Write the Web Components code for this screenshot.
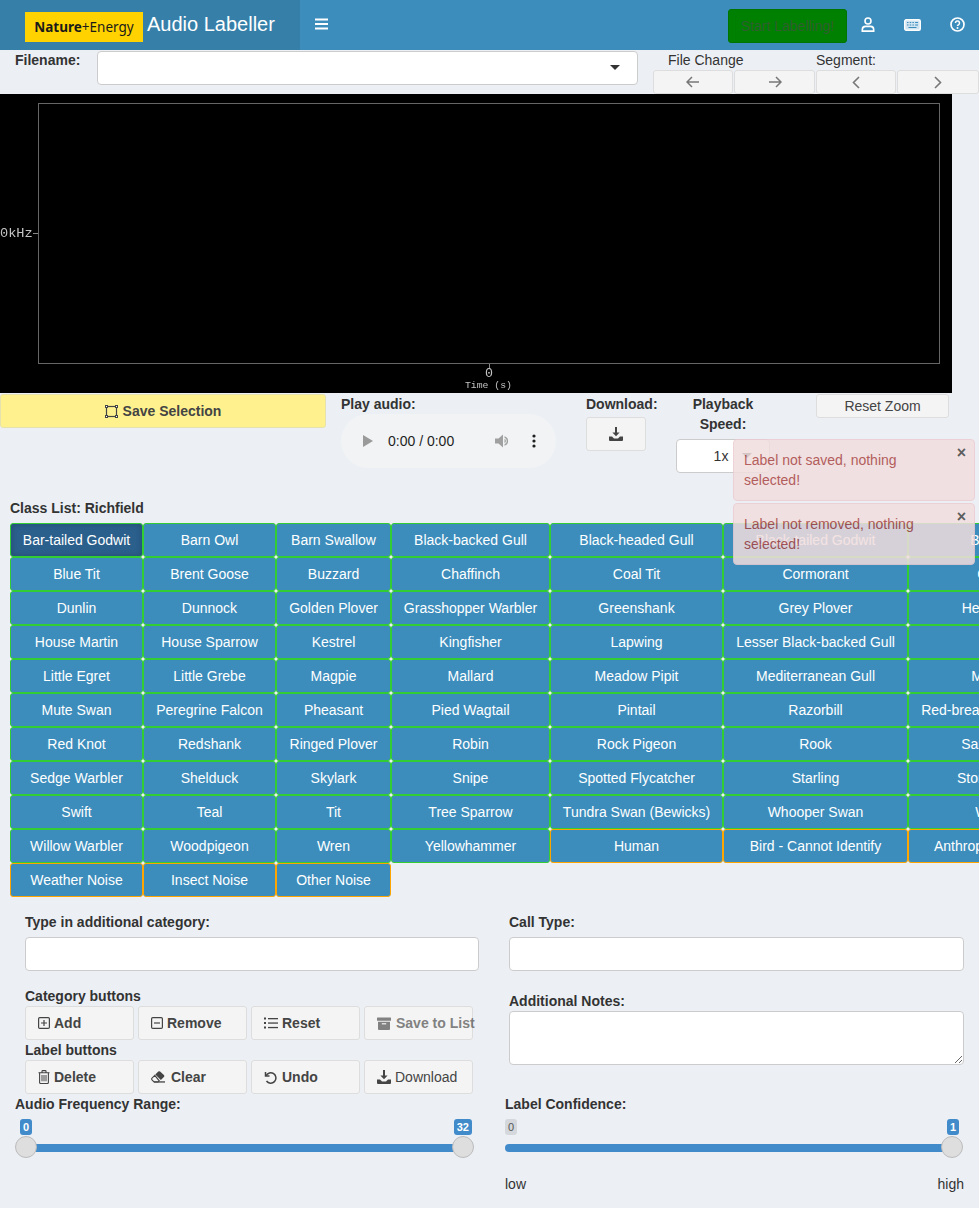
<!DOCTYPE html>
<html lang="en">
<head>
<meta charset="utf-8">
<title>Audio Labeller</title>
<style>
  html, body { margin: 0; height: 1208px; overflow: hidden; }
  body {
    position: relative;
    width: 979px;
    background: #ecf0f5;
    color: #333;
    font: 14px/20px "Liberation Sans", Arial, sans-serif;
  }
</style>
</head>
<body>
<app-header></app-header>
<file-bar></file-bar>
<spectro-plot></spectro-plot>
<control-row></control-row>
<class-grid title="Class List: Richfield"></class-grid>
<label-form></label-form>
<div style="display:flex;padding-left:15px">
  <range-slider style="width:459px;margin-right:31px" label="Audio Frequency Range:" from="0" to="32" pad-l="5" pad-r="2"></range-slider>
  <range-slider style="width:459px" label="Label Confidence:" from="0" to="1" single="1"></range-slider>
</div>
<toast-stack>
  <toast-note>Label not saved, nothing selected!</toast-note>
  <toast-note>Label not removed, nothing selected!</toast-note>
</toast-stack>

<script>
const ICONS = {
  bars: `<svg width="13" height="12" viewBox="0 0 13 12" fill="#fff"><rect y="0.5" width="13" height="2"/><rect y="5" width="13" height="2"/><rect y="9.5" width="13" height="2"/></svg>`,
  user: `<svg width="14" height="15" viewBox="0 0 14 15" fill="none" stroke="#fff" stroke-width="1.6"><circle cx="7" cy="4" r="3"/><path d="M1.3 14.1h11.4v-1.4c0-2-1.4-3.3-3.2-3.3h-5c-1.8 0-3.2 1.300-3.200 3.300z"/></svg>`,
  keyboard: `<svg width="17" height="12" viewBox="0 0 17 12"><rect x=".7" y=".7" width="15.600" height="10.600" rx="1.500" fill="#cfe3f0" stroke="#fff" stroke-width="1.400"/><path d="M3 3.500h1.500M5.700 3.500h1.500M8.400 3.500h1.500M11.100 3.500h2.900M3 6h1.500M5.700 6h1.500M8.400 6h1.500M11.100 6h2.900M4.500 8.500h8" stroke="#3c8dbc" stroke-width="1.100"/></svg>`,
  question: `<svg width="15" height="15" viewBox="0 0 15 15" fill="none" stroke="#fff"><circle cx="7.500" cy="7.500" r="6.500" stroke-width="1.700"/><path d="M5.500 5.900a2 2 0 1 1 3.100 1.700c-.8.500-1.100.8-1.100 1.500" stroke-width="1.500"/><circle cx="7.500" cy="11" r="1" fill="#fff" stroke="none"/></svg>`,
  left: `<svg width="14" height="12" viewBox="0 0 14 12" fill="none" stroke="#777" stroke-width="1.500"><path d="M13 6H1.500M6 1 1 6l5 5"/></svg>`,
  right: `<svg width="14" height="12" viewBox="0 0 14 12" fill="none" stroke="#777" stroke-width="1.500"><path d="M1 6h11.500M8 1l5 5-5 5"/></svg>`,
  chevl: `<svg width="8" height="13" viewBox="0 0 8 13" fill="none" stroke="#777" stroke-width="1.600"><path d="M7 1 1.500 6.500 7 12"/></svg>`,
  chevr: `<svg width="8" height="13" viewBox="0 0 8 13" fill="none" stroke="#777" stroke-width="1.600"><path d="M1 1l5.500 5.500L1 12"/></svg>`,
  square: `<svg width="13" height="13" viewBox="0 0 13 13" fill="none" stroke="#444"><rect x="1.500" y="1.500" width="10" height="10" stroke-width="1.200"/><g fill="#fff" stroke-width="1"><rect x=".5" y=".5" width="2" height="2"/><rect x="10.500" y=".5" width="2" height="2"/><rect x=".5" y="10.500" width="2" height="2"/><rect x="10.500" y="10.500" width="2" height="2"/></g></svg>`,
  download: `<svg width="14" height="14" viewBox="0 0 14 14" fill="#444"><path d="M6 0h2v5.500h2.600L7 9.200 3.400 5.500H6z"/><path d="M0 9.500h3l2 2h4l2-2h3V13a1 1 0 0 1-1 1H1a1 1 0 0 1-1-1z"/></svg>`,
  plus: `<svg width="12" height="12" viewBox="0 0 12 12" fill="none" stroke="#444"><rect x=".6" y=".6" width="10.800" height="10.800" rx="1.200" stroke-width="1.200"/><path d="M6 3v6M3 6h6" stroke-width="1.200"/></svg>`,
  minus: `<svg width="12" height="12" viewBox="0 0 12 12" fill="none" stroke="#444"><rect x=".6" y=".6" width="10.800" height="10.800" rx="1.200" stroke-width="1.200"/><path d="M3 6h6" stroke-width="1.200"/></svg>`,
  list: `<svg width="14" height="12" viewBox="0 0 14 12" fill="#444"><rect y=".5" width="2" height="2"/><rect y="5" width="2" height="2"/><rect y="9.500" width="2" height="2"/><rect x="4" y="1" width="10" height="1.300"/><rect x="4" y="5.400" width="10" height="1.300"/><rect x="4" y="9.900" width="10" height="1.300"/></svg>`,
  archive: `<svg width="14" height="13" viewBox="0 0 14 13" fill="#444"><rect y=".5" width="14" height="3.200" rx=".5"/><path d="M1 4.700h12v7.300a1 1 0 0 1-1 1H2a1 1 0 0 1-1-1z"/><rect x="4.800" y="6.200" width="4.400" height="1.200" fill="#f4f4f4"/></svg>`,
  trash: `<svg width="12" height="14" viewBox="0 0 12 14" fill="none" stroke="#444"><path d="M.5 2.800h11M4 2.800V1.300q0-.7.700-.7h2.600q.7 0 .7.700v1.500" stroke-width="1.100"/><path d="M1.600 2.800v9.700q0 1 1 1h6.800q1 0 1-1V2.800" stroke-width="1.100"/><path d="M4 5v6.300M6 5v6.300M8 5v6.300" stroke-width="1"/></svg>`,
  eraser: `<svg width="14" height="12" viewBox="0 0 14 12" fill="#444"><path d="M4.300 3.600 7.300.6a1.300 1.300 0 0 1 1.800 0l3.800 3.500a1.300 1.300 0 0 1 0 1.800l-3 3z"/><path d="M3.800 4.400 1 7.200a1.200 1.200 0 0 0 0 1.700l2 2.100h4l1.200-1.200z" fill="none" stroke="#444" stroke-width="1.100"/><rect x="3" y="10.300" width="11" height="1.300"/></svg>`,
  undo: `<svg width="13" height="13" viewBox="0 0 13 13" fill="none" stroke="#444" stroke-width="1.500"><path d="M1.500 1v4h4"/><path d="M2 4.800A5.200 5.200 0 1 1 2.500 10"/></svg>`,
};

class AppHeader extends HTMLElement {
  constructor() {
    super();
    this.attachShadow({ mode: "open" });
  }

  static get styles() {
    return /* css */`
      :host {
        display: flex;
        height: 50px;
        background: #3c8dbc;
        color: #fff;
      }

      .brand {
        display: flex;
        align-items: center;
        box-sizing: border-box;
        width: 300px;
        padding-left: 25px;
        background: #367fa9;
      }

      .logo {
        display: block;
        width: 118px;
        height: 30px;
        margin-top: 4px;
        margin-right: 4px;
        background: #ffd200;
        color: #1a1a1a;
        font: 13.500px/31px "Noto Sans", sans-serif;
        text-align: center;
      }

      .logo b {
        font-weight: 700;
      }

      .title {
        font-size: 20px;
        margin-top: -2px;
      }

      .toggle {
        display: flex;
        align-items: center;
        margin-left: 15px;
        margin-top: -2px;
      }

      .right {
        display: flex;
        align-items: center;
        margin-left: auto;
      }

      .start {
        box-sizing: border-box;
        width: 119px;
        height: 34px;
        margin-top: 2px;
        background: #008000;
        border: 1px solid #007400;
        border-radius: 3px;
        color: #2f5f2f;
        font: inherit;
        padding: 0;
      }

      .nav {
        display: flex;
        justify-content: center;
        width: 44px;
        margin-top: -1px;
      }
    `;
  }

  connectedCallback() {
    this.shadowRoot.innerHTML = /* html */`
    <style>${AppHeader.styles}</style>
    <div class="brand">
      <span class="logo"><b>Nature</b>+Energy</span>
      <span class="title">Audio Labeller</span>
    </div>
    <div class="toggle">${ICONS.bars}</div>
    <div class="right">
      <button class="start">Start Labelling!</button>
      <span class="nav" style="margin-left:-1px">${ICONS.user}</span>
      <span class="nav" style="margin-right:1px">${ICONS.keyboard}</span>
      <span class="nav">${ICONS.question}</span>
    </div>`;
  }
}

// plain grey bootstrap style button, label goes in the slot
class ActionButton extends HTMLElement {
  constructor() {
    super();
    this.attachShadow({ mode: "open" });
  }

  static get styles() {
    return /* css */`
      :host {
        display: block;
        box-sizing: border-box;
        height: 34px;
        background: #f4f4f4;
        border: 1px solid #ddd;
        border-radius: 3px;
        color: #444;
        white-space: nowrap;
      }

      :host([disabled]) .inner {
        opacity: .65;
      }

      :host([bold]) .inner {
        font-weight: 700;
      }

      :host([center]) .inner {
        justify-content: center;
        padding: 0;
      }

      .inner {
        display: flex;
        align-items: center;
        height: 100%;
        padding-left: 12px;
      }

      svg {
        display: block;
        flex: none;
      }

      .gap {
        width: var(--icon-gap, 4px);
        flex: none;
      }
    `;
  }

  connectedCallback() {
    const icon = this.getAttribute("icon");
    this.shadowRoot.innerHTML = /* html */`
    <style>${ActionButton.styles}</style>
    <div class="inner">
      ${icon ? ICONS[icon] : ""}
      <span class="gap"></span>
      <slot></slot>
    </div>`;
  }
}

class FileBar extends HTMLElement {
  constructor() {
    super();
    this.attachShadow({ mode: "open" });
  }

  static get styles() {
    return /* css */`
      :host {
        display: flex;
        height: 44px;
      }

      .name {
        width: 82px;
        padding-left: 15px;
        font-weight: 700;
      }

      .select {
        position: relative;
        box-sizing: border-box;
        width: 541px;
        height: 34px;
        margin-top: 1px;
        background: #fff;
        border: 1px solid #ccc;
        border-radius: 4px;
      }

      .select::after {
        content: "";
        position: absolute;
        right: 17px;
        top: 13px;
        border: 5px solid transparent;
        border-top-color: #333;
        border-bottom: 0;
      }

      .nav {
        display: grid;
        grid-template-columns: 81px 82px 81px 82px;
        grid-template-rows: 20px 24px;
        margin-left: 15px;
      }

      .head {
        grid-column: span 2;
      }

      .head:first-child {
        padding-left: 15px;
      }

      action-button {
        height: 24px;
        margin-right: 1px;
      }

      action-button:last-child {
        margin-right: 0;
      }
    `;
  }

  connectedCallback() {
    const arrow = (icon) => `<action-button center icon="${icon}" style="--icon-gap:0"></action-button>`;
    this.shadowRoot.innerHTML = /* html */`
    <style>${FileBar.styles}</style>
    <div class="name">Filename:</div>
    <div class="select"></div>
    <div class="nav">
      <div class="head">File Change</div>
      <div class="head">Segment:</div>
      ${arrow("left")}${arrow("right")}${arrow("chevl")}${arrow("chevr")}
    </div>`;
  }
}

class SpectroPlot extends HTMLElement {
  constructor() {
    super();
    this.attachShadow({ mode: "open" });
  }

  static get styles() {
    return /* css */`
      :host {
        display: block;
        width: 952px;
        height: 299px;
        background: #000;
      }

      svg {
        display: block;
        will-change: transform;
      }

      text {
        fill: #c4c4c4;
        font-family: "Liberation Mono", monospace;
      }
    `;
  }

  connectedCallback() {
    this.shadowRoot.innerHTML = /* html */`
    <style>${SpectroPlot.styles}</style>
    <svg width="952" height="299">
      <rect x="38.500" y="9.500" width="901" height="260" fill="none" stroke="#666"/>
      <path d="M33 139.500h5M489.500 270v5" stroke="#888"/>
      <text x="0" y="143" font-size="13.600">0kHz</text>
      <text x="489" y="283" font-size="13.300" text-anchor="middle">0</text>
      <text x="488.500" y="294" font-size="9.800" text-anchor="middle">Time (s)</text>
    </svg>`;
  }
}

class AudioBar extends HTMLElement {
  constructor() {
    super();
    this.attachShadow({ mode: "open" });
  }

  static get styles() {
    return /* css */`
      :host {
        display: flex;
        align-items: center;
        box-sizing: border-box;
        width: 215px;
        height: 54px;
        padding-left: 22px;
        background: #f1f3f4;
        border-radius: 27px;
        color: #1f1f1f;
      }

      .time {
        margin-left: 15px;
      }

      .vol {
        margin-left: 41px;
      }

      .more {
        margin-left: 21px;
      }

      svg {
        display: block;
      }
    `;
  }

  connectedCallback() {
    this.shadowRoot.innerHTML = /* html */`
    <style>${AudioBar.styles}</style>
    <svg width="10" height="12" viewBox="0 0 10 12"><path d="M0 0l10 6-10 6z" fill="#9a9a9a"/></svg>
    <span class="time">0:00 / 0:00</span>
    <svg class="vol" width="16" height="14" viewBox="0 0 16 14" fill="#a0a0a0"><path d="M0 4.500h3.500L8 .5v13l-4.500-4H0z"/><path d="M9.500 2.200a5 5 0 0 1 0 9.600v-1.600a3.400 3.400 0 0 0 0-6.400z"/><path d="M9.500 4.800a2.400 2.400 0 0 1 0 4.400z"/></svg>
    <svg class="more" width="4" height="14" viewBox="0 0 4 14" fill="#1f1f1f"><circle cx="2" cy="2" r="1.600"/><circle cx="2" cy="7" r="1.600"/><circle cx="2" cy="12" r="1.600"/></svg>`;
  }
}

class ControlRow extends HTMLElement {
  constructor() {
    super();
    this.attachShadow({ mode: "open" });
  }

  static get styles() {
    return /* css */`
      :host {
        display: flex;
        align-items: flex-start;
        height: 105px;
        padding-top: 1px;
        box-sizing: border-box;
      }

      b {
        display: block;
      }

      .save {
        width: 326px;
        margin-right: 15px;
        background: #fff28e;
        border-color: #e6e2b0;
        --icon-gap: 5px;
      }

      .play {
        width: 245px;
      }

      .dl {
        width: 90px;
      }

      .dl action-button {
        width: 60px;
        margin-top: 3px;
        --icon-gap: 0;
      }

      .speed {
        width: 94px;
        text-align: center;
        margin-right: 46px;
      }

      .speed .box {
        position: relative;
        box-sizing: border-box;
        height: 34px;
        margin-top: 5px;
        padding-right: 4px;
        background: #fff;
        border: 1px solid #ccc;
        border-radius: 4px;
        line-height: 32px;
      }

      .speed .box::after {
        content: "";
        position: absolute;
        right: 17px;
        top: 13px;
        border: 5px solid transparent;
        border-top-color: #333;
        border-bottom: 0;
      }

      .reset {
        width: 133px;
        height: 24px;
        --icon-gap: 0;
      }
    `;
  }

  connectedCallback() {
    this.shadowRoot.innerHTML = /* html */`
    <style>${ControlRow.styles}</style>
    <action-button class="save" center bold icon="square">Save Selection</action-button>
    <div class="play"><b>Play audio:</b><audio-bar></audio-bar></div>
    <div class="dl"><b>Download:</b><action-button center icon="download"></action-button></div>
    <div class="speed"><b>Playback Speed:</b><div class="box">1x</div></div>
    <action-button class="reset" center>Reset Zoom</action-button>`;
  }
}

class ClassGrid extends HTMLElement {
  constructor() {
    super();
    this.attachShadow({ mode: "open" });
  }

  static get classes() {
    return [
      "Bar-tailed Godwit", "Barn Owl", "Barn Swallow", "Black-backed Gull", "Black-headed Gull", "Black-tailed Godwit", "Blackbird",
      "Blue Tit", "Brent Goose", "Buzzard", "Chaffinch", "Coal Tit", "Cormorant", "Curlew",
      "Dunlin", "Dunnock", "Golden Plover", "Grasshopper Warbler", "Greenshank", "Grey Plover", "Herring Gull",
      "House Martin", "House Sparrow", "Kestrel", "Kingfisher", "Lapwing", "Lesser Black-backed Gull", "Linnet",
      "Little Egret", "Little Grebe", "Magpie", "Mallard", "Meadow Pipit", "Mediterranean Gull", "Moorhen",
      "Mute Swan", "Peregrine Falcon", "Pheasant", "Pied Wagtail", "Pintail", "Razorbill", "Red-breasted Merganser",
      "Red Knot", "Redshank", "Ringed Plover", "Robin", "Rock Pigeon", "Rook", "Sand Martin",
      "Sedge Warbler", "Shelduck", "Skylark", "Snipe", "Spotted Flycatcher", "Starling", "Stone Curlew",
      "Swift", "Teal", "Tit", "Tree Sparrow", "Tundra Swan (Bewicks)", "Whooper Swan", "Wigeon",
      "Willow Warbler", "Woodpigeon", "Wren", "Yellowhammer", "Human", "Bird - Cannot Identify", "Anthropogenic Noise",
      "Weather Noise", "Insect Noise", "Other Noise",
    ];
  }

  static get styles() {
    return /* css */`
      :host {
        display: block;
        padding-left: 10px;
      }

      .title {
        font-weight: 700;
        margin-bottom: 5px;
      }

      .grid {
        display: grid;
        grid-template-columns: 133px 133px 115px 159px 173px 185px 182px;
        grid-auto-rows: 34px;
        width: 1080px;
      }

      button {
        padding: 0;
        background: #3c8dbc;
        border: 1px solid #32cd32;
        border-radius: 3px;
        color: #fff;
        font: inherit;
        white-space: nowrap;
      }

      .other {
        border-color: #ffa500;
      }

      .on {
        background: #2b5f8c;
        box-shadow: inset 0 0 6px rgba(0, 0, 0, .2);
      }
    `;
  }

  connectedCallback() {
    const other = ["Human", "Bird - Cannot Identify", "Anthropogenic Noise", "Weather Noise", "Insect Noise", "Other Noise"];
    const buttons = ClassGrid.classes.map((name, i) => {
      const cls = [other.includes(name) ? "other" : "", i === 0 ? "on" : ""].join(" ").trim();
      return `<button class="${cls}">${name}</button>`;
    }).join("");
    this.shadowRoot.innerHTML = /* html */`
    <style>${ClassGrid.styles}</style>
    <div class="title">${this.getAttribute("title")}</div>
    <div class="grid">${buttons}</div>`;
  }
}

class LabelForm extends HTMLElement {
  constructor() {
    super();
    this.attachShadow({ mode: "open" });
  }

  static get styles() {
    return /* css */`
      :host {
        display: flex;
        padding: 15px 0 0 25px;
      }

      .left {
        width: 454px;
        margin-right: 30px;
      }

      .right {
        width: 455px;
      }

      b {
        display: block;
      }

      input,
      textarea {
        display: block;
        box-sizing: border-box;
        width: 100%;
        margin: 5px 0 0;
        background: #fff;
        border: 1px solid #ccc;
        border-radius: 4px;
        font: inherit;
      }

      input {
        height: 34px;
      }

      textarea {
        height: 54px;
        margin: 0;
      }

      .cat {
        margin-top: 15px;
      }

      .notes {
        margin-top: 20px;
      }

      .btns {
        display: grid;
        grid-template-columns: repeat(4, 109px);
        column-gap: 4px;
      }
    `;
  }

  connectedCallback() {
    this.shadowRoot.innerHTML = /* html */`
    <style>${LabelForm.styles}</style>
    <div class="left">
      <b>Type in additional category:</b>
      <input type="text">
      <b class="cat">Category buttons</b>
      <div class="btns">
        <action-button bold icon="plus">Add</action-button>
        <action-button bold icon="minus">Remove</action-button>
        <action-button bold icon="list">Reset</action-button>
        <action-button bold disabled icon="archive" style="--icon-gap:5px">Save to List</action-button>
      </div>
      <b>Label buttons</b>
      <div class="btns">
        <action-button bold icon="trash">Delete</action-button>
        <action-button bold icon="eraser" style="--icon-gap:6px">Clear</action-button>
        <action-button bold icon="undo" style="--icon-gap:5px">Undo</action-button>
        <action-button icon="download">Download</action-button>
      </div>
    </div>
    <div class="right">
      <b>Call Type:</b>
      <input type="text">
      <b class="notes">Additional Notes:</b>
      <textarea></textarea>
    </div>`;
  }
}

class RangeSlider extends HTMLElement {
  constructor() {
    super();
    this.attachShadow({ mode: "open" });
  }

  static get styles() {
    return /* css */`
      :host {
        display: block;
      }

      b {
        display: block;
      }

      .bubbles {
        display: flex;
        justify-content: space-between;
        margin-top: 5px;
        height: 17px;
      }

      .bubble {
        height: 16px;
        padding: 0 3px;
        background: #428bca;
        border-radius: 3px;
        color: #fff;
        font-size: 11px;
        line-height: 16px;
        font-weight: 700;
      }

      .bubble.off {
        background: rgba(0, 0, 0, .1);
        color: #555;
        font-weight: 400;
      }

      .track {
        position: relative;
        display: flex;
        height: 22px;
      }

      .track::before {
        content: "";
        position: absolute;
        left: 0;
        right: 0;
        top: 8px;
        height: 8px;
        background: #428bca;
      }

      .fill {
        flex: 1;
      }

      .handle {
        position: relative;
        box-sizing: border-box;
        width: 22px;
        height: 22px;
        background: #dedede;
        border: 1px solid #bbb;
        border-radius: 50%;
      }

      :host([single]) .track {
        margin-right: 1px;
      }

      :host([single]) .track::before {
        border-radius: 4px 0 0 4px;
        right: 10px;
      }

      :host(:not([single])) .track::before {
        left: 11px;
        right: 11px;
      }

      .scale {
        display: flex;
        justify-content: space-between;
        margin-top: 16px;
      }
    `;
  }

  connectedCallback() {
    const single = this.hasAttribute("single");
    const padL = this.getAttribute("pad-l") || 0;
    const padR = this.getAttribute("pad-r") || 5;
    this.shadowRoot.innerHTML = /* html */`
    <style>${RangeSlider.styles}</style>
    <b>${this.getAttribute("label")}</b>
    <div class="bubbles" style="padding:0 ${padR}px 0 ${padL}px">
      <span class="bubble ${single ? "off" : ""}">${this.getAttribute("from")}</span>
      <span class="bubble">${this.getAttribute("to")}</span>
    </div>
    <div class="track">
      ${single ? "" : `<span class="handle"></span>`}
      <span class="fill"></span>
      <span class="handle"></span>
    </div>
    ${single ? `<div class="scale"><span>low</span><span>high</span></div>` : ""}`;
  }
}

class ToastStack extends HTMLElement {
  constructor() {
    super();
    this.attachShadow({ mode: "open" });
  }

  connectedCallback() {
    this.shadowRoot.innerHTML = /* html */`
    <style>
      :host {
        position: absolute;
        left: 733px;
        top: 439px;
        display: flex;
        flex-direction: column;
        gap: 2px;
        width: 242px;
      }
    </style>
    <slot></slot>`;
  }
}

class ToastNote extends HTMLElement {
  constructor() {
    super();
    this.attachShadow({ mode: "open" });
  }

  static get styles() {
    return /* css */`
      :host {
        position: relative;
        display: block;
        box-sizing: border-box;
        height: 62px;
        padding: 10px 30px 10px 10px;
        background: #f2dede;
        border: 1px solid #ebccd1;
        border-radius: 4px;
        color: #a94442;
        opacity: .85;
      }

      .close {
        position: absolute;
        right: 8px;
        top: 3px;
        color: #444;
        font-size: 16px;
        font-weight: 700;
      }
    `;
  }

  connectedCallback() {
    this.shadowRoot.innerHTML = /* html */`
    <style>${ToastNote.styles}</style>
    <slot></slot>
    <span class="close">×</span>`;
  }
}

customElements.define("app-header", AppHeader);
customElements.define("action-button", ActionButton);
customElements.define("file-bar", FileBar);
customElements.define("spectro-plot", SpectroPlot);
customElements.define("audio-bar", AudioBar);
customElements.define("control-row", ControlRow);
customElements.define("class-grid", ClassGrid);
customElements.define("label-form", LabelForm);
customElements.define("range-slider", RangeSlider);
customElements.define("toast-stack", ToastStack);
customElements.define("toast-note", ToastNote);
</script>
</body>
</html>
